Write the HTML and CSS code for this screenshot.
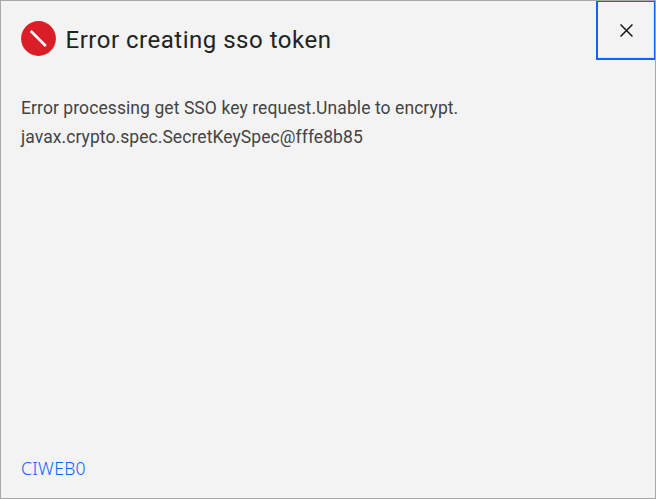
FILE: index.html
```html
<!DOCTYPE html>
<html lang="en">
<head>
<meta charset="utf-8">
<title>Error creating sso token</title>
<link rel="stylesheet" href="styles.css">
</head>
<body>
<main class="dialog">
  <header class="dialog-header">
    <svg class="error-icon" viewBox="0 0 35 35" aria-hidden="true"><circle cx="17.5" cy="17.5" r="17.4" fill="#da1e28"/><path d="M9.8 10 24.8 25" stroke="#fff" stroke-width="2.6"/></svg>
    <h1 class="title">Error creating sso token</h1>
    <button class="close" type="button" aria-label="Close"><svg class="close-icon" viewBox="0 0 12 12" aria-hidden="true"><path d="M.5.5 11.5 11.5M11.5.5.5 11.5" fill="none" stroke="#161616" stroke-width="1.4"/></svg></button>
  </header>
  <div class="message">
    <p class="line-one">Error processing get SSO key request.Unable to encrypt.</p>
    <p class="line-two">javax.crypto.spec.SecretKeySpec@fffe8b85</p>
  </div>
  <footer class="dialog-footer"><a class="code" href="#">CIWEB0</a></footer>
</main>
</body>
</html>
```

FILE: styles.css
```css
* { box-sizing: border-box; }
body { margin: 0; font-family: Roboto, "Liberation Sans", sans-serif; }
.dialog {
  display: flex;
  flex-direction: column;
  height: 499px;
  border: 1px solid #a8a8a8;
  background: #f3f3f3;
  color: #222;
}
.dialog-header { display: flex; align-items: flex-start; padding-left: 20px; height: 93px; }
.error-icon { width: 35px; height: 35px; margin-top: 20px; flex: none; }
.title {
  margin: 23px 0 0 9.5px;
  font-size: 24px;
  line-height: 32px;
  font-weight: 400;
  letter-spacing: .51px;
  white-space: nowrap;
}
.close {
  display: grid;
  place-items: center;
  width: 59px;
  height: 59px;
  margin-left: auto;
  padding: 0;
  border: 2px solid #0f62fe;
  border-right-width: 1px;
  border-top-width: 1px;
  background: #f3f3f3;
  box-shadow: inset -1px -1px #e4e4e8;
}
.close-icon { width: 13px; height: 13px; }
.message { padding-left: 20px; font-size: 17.5px; line-height: 29px; color: #444; }
.message p { margin: 0; white-space: nowrap; }
.line-one { letter-spacing: .08px; }
.line-two { letter-spacing: .07px; }
.dialog-footer { margin-top: auto; padding: 0 0 15px 20px; }
.code {
  display: block;
  width: max-content;
  color: #0f62fe;
  font-family: "Noto Sans", sans-serif;
  font-size: 17.5px;
  font-weight: 300;
  letter-spacing: .35px;
  line-height: 29px;
  text-decoration: none;
}
```
